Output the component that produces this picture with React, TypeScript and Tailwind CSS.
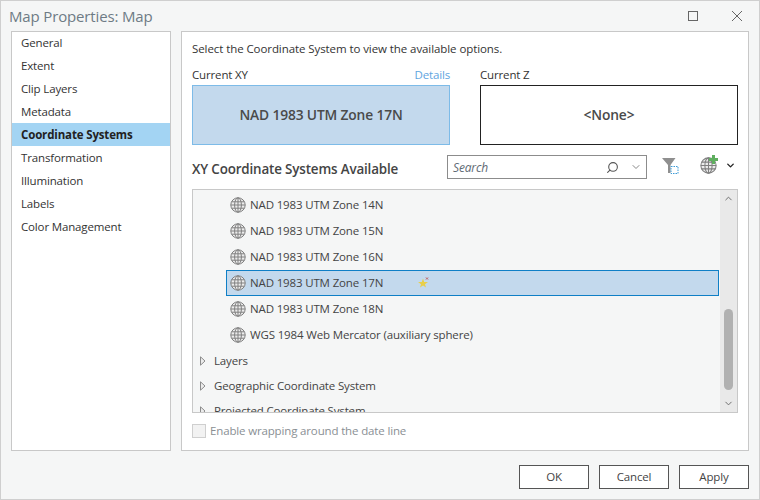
import React from 'react';
import { ChevronDown, ChevronUp, Search } from 'lucide-react';

const pages = ['General', 'Extent', 'Clip Layers', 'Metadata', 'Coordinate Systems', 'Transformation', 'Illumination', 'Labels', 'Color Management'];

const zones = [
  { name: 'NAD 1983 UTM Zone 14N' },
  { name: 'NAD 1983 UTM Zone 15N' },
  { name: 'NAD 1983 UTM Zone 16N' },
  { name: 'NAD 1983 UTM Zone 17N', selected: true },
  { name: 'NAD 1983 UTM Zone 18N' },
  { name: 'WGS 1984 Web Mercator (auxiliary sphere)' },
];

const GlobeIcon = ({ className }: { className?: string }) => (
  <svg viewBox="0 0 16 16" className={className} fill="none" stroke="#808080" strokeWidth="1">
    <circle cx="8" cy="8" r="7.2" fill="#ececec" />
    <ellipse cx="8" cy="8" rx="3.4" ry="7.2" />
    <path d="M8 .8v14.4M1.6 4.8h12.8M.8 8h14.4M1.6 11.2h12.8" />
  </svg>
);

const Caret = () => (
  <svg viewBox="0 0 6 10" className="w-[6px] h-[10px]" fill="#ececec" stroke="#8c8c8c">
    <path d="M.5.8 5 5 .5 9.2z" />
  </svg>
);

const DialogButton = ({ label }: { label: string }) => (
  <button className="w-[70px] h-6 border border-[#555] bg-white text-[#444]">{label}</button>
);

export default function App() {
  return (
    <div className="w-[760px] h-[500px] flex flex-col bg-[#f5f6f6] border border-[#cfcfcf] text-[11.5px] tracking-[-0.15px] text-[#333] font-['Open_Sans',sans-serif] overflow-hidden">
      {/* Title bar */}
      <div className="h-[30px] shrink-0 flex items-center pl-[8px] pr-[17px]">
        <span className="text-[15px] text-[#6e7b85] flex-1">Map Properties: Map</span>
        <div className="w-[10px] h-[10px] border border-[#666] mr-[34px]" />
        <svg viewBox="0 0 10 10" className="w-[10px] h-[10px]" stroke="#666" strokeWidth="1">
          <path d="M0 0l10 10M10 0 0 10" />
        </svg>
      </div>

      <div className="flex-1 flex gap-[10px] px-[10px] min-h-0">
        {/* Pages list */}
        <div className="w-[160px] h-[420px] bg-white border border-[#c8c8c8]">
          <div className="-mt-px">
            {pages.map((p) => (
              <div
                key={p}
                className={`h-[23px] flex items-center pl-[9px] ${p === 'Coordinate Systems' ? 'bg-[#a3d4f3] font-bold text-[#222]' : 'text-[#333]'}`}
              >
                {p}
              </div>
            ))}
          </div>
        </div>

        {/* Coordinate system panel */}
        <div className="w-[568px] h-[420px] bg-white border border-[#c8c8c8] pl-[10px] pr-[10px] flex flex-col">
          <div className="h-[34px] flex items-center tracking-[-0.08px]">Select the Coordinate System to view the available options.</div>
          <div className="flex gap-[30px]">
            <div className="w-[258px]">
              <div className="h-[19px] flex items-center justify-between pb-[1px]">
                <span>Current XY</span>
                <span className="text-[#5ea5e0]">Details</span>
              </div>
              <div className="h-[60px] flex items-center justify-center bg-[#c3d9ed] border border-[#7dbbe8] text-[13.8px] font-semibold text-[#4a4a4a]">
                NAD 1983 UTM Zone 17N
              </div>
            </div>
            <div className="w-[258px]">
              <div className="h-[19px] flex items-center pb-[1px]">Current Z</div>
              <div className="h-[60px] flex items-center justify-center border border-[#222] text-[13.8px] font-semibold text-[#4a4a4a]">
                &lt;None&gt;
              </div>
            </div>
          </div>

          <div className="h-[24px] mt-[10px] flex items-center">
            <span className="flex-1 text-[13.4px] font-semibold text-[#444] pt-[5px]">XY Coordinate Systems Available</span>
            <div className="w-[200px] h-[24px] border border-[#8c8c8c] flex items-center pl-[5px] pr-[4px]">
              <span className="flex-1 italic text-[12px] text-[#5f6b75] pt-[1px]">Search</span>
              <Search className="w-[13px] h-[13px] text-[#555] -scale-x-100 mr-[11px]" strokeWidth={2} />
              <ChevronDown className="w-[12px] h-[12px] text-[#888]" />
            </div>
            <svg viewBox="0 0 18 18" className="w-[18px] h-[18px] ml-[15px] -mt-[2px]">
              <path d="M0 1h13.5L8.5 8v8H6V8z" fill="#8f8f8f" />
              <rect x="9" y="9.5" width="7" height="7" fill="#fff" stroke="#3b9ad6" strokeDasharray="1.5 1" />
            </svg>
            <div className="relative w-[17px] h-[17px] ml-[20px] -mt-[3px]">
              <GlobeIcon className="w-[17px] h-[17px]" />
              <span className="absolute -top-[2px] -right-[1px] w-[9px] h-[9px]">
                <svg viewBox="0 0 9 9" className="w-[9px] h-[9px]"><path d="M3 0h3v3h3v3H6v3H3V6H0V3h3z" fill="#5eae5e" /></svg>
              </span>
            </div>
            <ChevronDown className="w-[11px] h-[11px] text-[#222] ml-[8px] mr-[2px] -mt-[3px]" strokeWidth={3} />
          </div>

          {/* Tree */}
          <div className="mt-[10px] w-[546px] h-[224px] shrink-0 border border-[#c8c8c8] bg-[#f5f6f6] flex overflow-hidden">
            <div className="flex-1 min-w-0 pt-[2px] overflow-hidden">
              {zones.map((z) => (
                <div
                  key={z.name}
                  className={`relative ml-[33px] mr-[1px] h-[26px] flex items-center pl-[3px] ${z.selected ? 'bg-[#c3d9ed] border border-[#0f7fc6]' : 'border border-transparent'}`}
                >
                  <GlobeIcon className="w-[16px] h-[16px] mr-[4px] shrink-0" />
                  <span className="text-[#444] pb-[1px]">{z.name}</span>
                  {z.selected && (
                    <svg viewBox="0 0 12 12" className="absolute left-[191px] top-[5px] w-[12px] h-[12px]">
                      <path d="M5 2.5 6.2 6 10 6 7 8.2 8 11.5 5 9.5 2 11.5 3 8.2 0 6 3.8 6z" fill="#e8cf4a" />
                      <path d="M8 1.5l2 2M10 1.5l-2 2" stroke="#c0504d" strokeWidth="0.9" />
                    </svg>
                  )}
                </div>
              ))}
              <div className="h-[25px] flex items-center pl-[7px] gap-[8px] text-[#444]"><Caret />Layers</div>
              <div className="h-[25px] flex items-center pl-[7px] gap-[8px] text-[#444]"><Caret />Geographic Coordinate System</div>
              <div className="h-[25px] flex items-center pl-[7px] gap-[8px] text-[#444]"><Caret />Projected Coordinate System</div>
            </div>
            {/* Scrollbar */}
            <div className="w-[17px] shrink-0 bg-[#e9e9e9] flex flex-col items-center py-[3px]">
              <ChevronUp className="w-[11px] h-[11px] text-[#666]" strokeWidth={2} />
              <div className="flex-1 w-full flex flex-col justify-end items-center pb-[8px]">
                <div className="w-[9px] h-[81px] rounded-full bg-[#b1b1b1]" />
              </div>
              <ChevronDown className="w-[11px] h-[11px] text-[#666]" strokeWidth={2} />
            </div>
          </div>

          <div className="mt-[11px] h-[14px] flex items-center gap-[4px] text-[#8a8f94]">
            <div className="w-[14px] h-[14px] border border-[#cfcfcf] bg-[#f2f2f2]" />
            Enable wrapping around the date line
          </div>
        </div>
      </div>

      <div className="h-[48px] shrink-0 flex items-start justify-end gap-[10px] pt-[14px] pr-[10px]">
        <DialogButton label="OK" />
        <DialogButton label="Cancel" />
        <DialogButton label="Apply" />
      </div>
    </div>
  );
}
